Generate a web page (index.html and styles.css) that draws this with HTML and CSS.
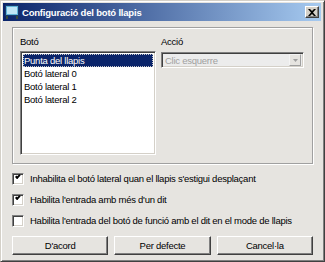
FILE: index.html
```html
<!DOCTYPE html>
<html lang="ca">
  <head>
    <meta charset="UTF-8" />
    <title>Configuració del botó llapis</title>
    <link rel="stylesheet" href="styles.css">
  </head>
  <body>
    <div class="window">
      <div class="titlebar">
        <svg class="app-icon" width="14" height="14" viewBox="0 0 14 14">
          <rect x="0.5" y="0.5" width="13" height="10" fill="#5fb4d8" stroke="#1a3a6a" />
          <rect x="2" y="2" width="10" height="7" fill="#bfe6f6" />
          <rect x="1" y="11" width="2" height="3" fill="#3a4a3a" />
          <rect x="11" y="11" width="2" height="3" fill="#3a4a3a" />
        </svg>
        <span class="title">Configuració del botó llapis</span>
        <div class="close-btn">
          <svg width="8" height="7" viewBox="0 0 8 7">
            <path d="M0 0h2l2 2 2-2h2L5 3.5 8 7H6L4 5 2 7H0l3-3.5z" fill="#000" />
          </svg>
        </div>
      </div>

      <div class="content">
        <div class="groupbox">
          <div class="column">
            <div class="label">Botó</div>
            <div class="listbox">
              <div class="item selected"><span>Punta del llapis</span></div>
              <div class="item">Botó lateral 0</div>
              <div class="item">Botó lateral 1</div>
              <div class="item">Botó lateral 2</div>
            </div>
          </div>
          <div class="column">
            <div class="label">Acció</div>
            <div class="combo">
              <span class="combo-text">Clic esquerre</span>
              <div class="combo-arrow">
                <svg width="5" height="3" viewBox="0 0 5 3">
                  <path d="M0 0h5L2.5 3z" fill="#a0a0a0" />
                </svg>
              </div>
            </div>
          </div>
        </div>

        <div class="checks">
          <label class="check-row">
            <span class="checkbox checked"></span>
            Inhabilita el botó lateral quan el llapis s'estigui desplaçant
          </label>
          <label class="check-row">
            <span class="checkbox checked"></span>
            Habilita l'entrada amb més d'un dit
          </label>
          <label class="check-row">
            <span class="checkbox"></span>
            Habilita l'entrada del botó de funció amb el dit en el mode de llapis
          </label>
        </div>

        <div class="buttons">
          <div class="button">D'acord</div>
          <div class="button">Per defecte</div>
          <div class="button">Cancel·la</div>
        </div>
      </div>
    </div>
  </body>
</html>
```

FILE: styles.css
```css
*,
*::before,
*::after {
  box-sizing: border-box;
}

body {
  margin: 0;
  font-family: "Liberation Sans", Arial, sans-serif;
  font-size: 9.5px;
  letter-spacing: -0.25px;
  color: #000;
  background: #fff;
}

.window {
  width: 325px;
  height: 262px;
  background-color: #e6e4e0;
  border: 1px solid;
  border-color: #d4d0c8 #404040 #404040 #d4d0c8;
  box-shadow: inset 1px 1px 0 #fff, inset -1px -1px 0 #808080;
  padding: 2px 3px 3px 2px;
  display: flex;
  flex-direction: column;
}

.titlebar {
  height: 18px;
  display: flex;
  align-items: center;
  padding: 0 2px 0 2px;
  background: linear-gradient(to right, #0a246a, #a6caf0);
  color: #fff;
}

.app-icon {
  margin-right: 3px;
}

.title {
  flex: 1;
  font-weight: bold;
  font-size: 9.5px;
  letter-spacing: -0.2px;
}

.close-btn {
  width: 14px;
  height: 12px;
  display: flex;
  align-items: center;
  justify-content: center;
  background-color: #d4d0c8;
  border: 1px solid;
  border-color: #fff #404040 #404040 #fff;
  box-shadow: inset -1px -1px 0 #808080;
}

.content {
  flex: 1;
  padding: 6px 8px 0 9px;
  display: flex;
  flex-direction: column;
}

.groupbox {
  height: 137px;
  border: 1px solid #a0a0a0;
  box-shadow: inset 1px 1px 0 #fff, 1px 1px 0 #fff;
  padding: 8px 8px 0 7px;
  display: flex;
  gap: 5px;
}

.label {
  height: 15px;
}

.listbox {
  width: 136px;
  height: 104px;
  background: #fff;
  border: 1px solid;
  border-color: #808080 #fff #fff #808080;
  box-shadow: inset 1px 1px 0 #404040, inset -1px -1px 0 #d4d0c8;
  padding: 2px;
}

.item {
  height: 13px;
  line-height: 13px;
  padding-left: 1px;
  white-space: nowrap;
}

.item.selected {
  background-color: #0a246a;
  color: #fff;
  outline: 1px dotted #c8c8c8;
  outline-offset: -1px;
}

.combo {
  width: 143px;
  height: 16px;
  margin-top: 1px;
  background-color: #ececec;
  border: 1px solid;
  border-color: #808080 #fff #fff #808080;
  box-shadow: inset 1px 1px 0 #404040, inset -1px -1px 0 #d4d0c8;
  display: flex;
  align-items: center;
  padding: 2px;
}

.combo-text {
  flex: 1;
  color: #a0a0a0;
  padding-left: 1px;
}

.combo-arrow {
  width: 12px;
  height: 12px;
  display: flex;
  align-items: center;
  justify-content: center;
  background-color: #e6e4e0;
  border: 1px solid;
  border-color: #f4f4f4 #a0a0a0 #a0a0a0 #f4f4f4;
}

.checks {
  display: flex;
  flex-direction: column;
  padding-top: 8px;
  gap: 8px;
}

.check-row {
  display: flex;
  align-items: center;
  height: 13px;
  gap: 6px;
  white-space: nowrap;
}

.checkbox {
  flex-shrink: 0;
  width: 12px;
  height: 12px;
  background: #fff;
  border: 1px solid;
  border-color: #808080 #fff #fff #808080;
  box-shadow: inset 1px 1px 0 #404040, inset -1px -1px 0 #d4d0c8;
  position: relative;
}

.checkbox.checked::after {
  content: "";
  position: absolute;
  left: 2px;
  top: 1px;
  width: 5px;
  height: 3px;
  border-left: 2px solid #000;
  border-bottom: 2px solid #000;
  transform: translate(0, 2px) rotate(-45deg);
  transform-origin: left top;
}

.buttons {
  margin-top: 9px;
  display: flex;
  gap: 6px;
}

.button {
  flex: 1;
  height: 19px;
  display: flex;
  align-items: center;
  justify-content: center;
  background-color: #e6e4e0;
  border: 1px solid;
  border-color: #fff #404040 #404040 #fff;
  box-shadow: inset -1px -1px 0 #808080;
}
```
